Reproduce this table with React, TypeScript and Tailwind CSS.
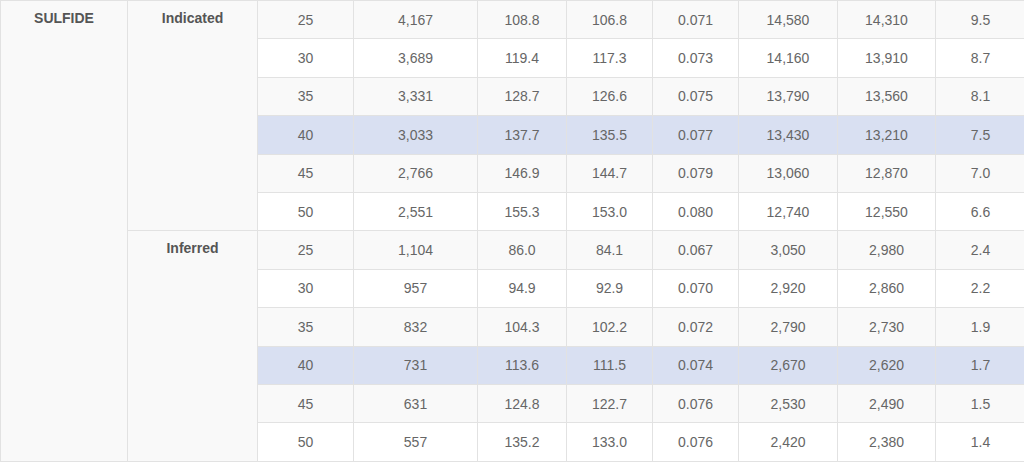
const GROUPS = [
  {
    name: 'Indicated',
    rows: [
      ['25', '4,167', '108.8', '106.8', '0.071', '14,580', '14,310', '9.5'],
      ['30', '3,689', '119.4', '117.3', '0.073', '14,160', '13,910', '8.7'],
      ['35', '3,331', '128.7', '126.6', '0.075', '13,790', '13,560', '8.1'],
      ['40', '3,033', '137.7', '135.5', '0.077', '13,430', '13,210', '7.5'],
      ['45', '2,766', '146.9', '144.7', '0.079', '13,060', '12,870', '7.0'],
      ['50', '2,551', '155.3', '153.0', '0.080', '12,740', '12,550', '6.6'],
    ],
  },
  {
    name: 'Inferred',
    rows: [
      ['25', '1,104', '86.0', '84.1', '0.067', '3,050', '2,980', '2.4'],
      ['30', '957', '94.9', '92.9', '0.070', '2,920', '2,860', '2.2'],
      ['35', '832', '104.3', '102.2', '0.072', '2,790', '2,730', '1.9'],
      ['40', '731', '113.6', '111.5', '0.074', '2,670', '2,620', '1.7'],
      ['45', '631', '124.8', '122.7', '0.076', '2,530', '2,490', '1.5'],
      ['50', '557', '135.2', '133.0', '0.076', '2,420', '2,380', '1.4'],
    ],
  },
]

const COL_WIDTHS = ['w-[127px]', 'w-[130px]', 'w-[96px]', 'w-[124px]', 'w-[89px]', 'w-[86px]', 'w-[86px]', 'w-[99px]', 'w-[98px]', 'w-[90px]']

export default function App() {
  return (
    <div className="w-[1024px] h-[462px] overflow-hidden bg-white font-['Liberation_Sans',Arial,sans-serif] text-[14px] text-[#666]">
      <table className="table-fixed border-collapse w-[1025px]">
        <colgroup>
          {COL_WIDTHS.map((w, i) => (
            <col key={i} className={w} />
          ))}
        </colgroup>
        <tbody>
          {GROUPS.map((g, gi) =>
            g.rows.map((r, ri) => {
              const highlight = r[0] === '40'
              const bg = highlight ? 'bg-[#d9e0f2]' : ri % 2 === 0 ? 'bg-[#f9f9f9]' : 'bg-white'
              return (
                <tr key={`${gi}-${ri}`} className={`h-[38.4px] ${bg}`}>
                  {gi === 0 && ri === 0 && (
                    <td rowSpan={12} className="bg-[#f9f9f9] border border-[#e2e2e2] align-top text-center pt-[7px] font-bold text-[#555]">
                      SULFIDE
                    </td>
                  )}
                  {ri === 0 && (
                    <td rowSpan={6} className="bg-[#f9f9f9] border border-[#e2e2e2] align-top text-center pt-[7px] font-bold text-[#555]">
                      {g.name}
                    </td>
                  )}
                  {r.map((v, ci) => (
                    <td key={ci} className="border border-[#e2e2e2] text-center align-middle p-0 leading-[20px]">
                      {v}
                    </td>
                  ))}
                </tr>
              )
            })
          )}
        </tbody>
      </table>
    </div>
  )
}
